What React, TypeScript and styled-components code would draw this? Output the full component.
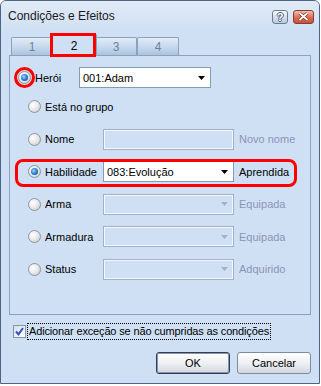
import styled, { createGlobalStyle } from 'styled-components';

const GlobalStyle = createGlobalStyle`
  html, body {
    margin: 0;
    padding: 0;
    background: #ffffff;
  }
  body {
    font-family: "Liberation Sans", Arial, sans-serif;
    font-size: 11px;
    color: #000;
  }
`;

interface RowData {
  label: string;
  value?: string;
  side?: string;
  enabled?: boolean;
  checked?: boolean;
  marked?: boolean;
  highlight?: boolean;
  combo?: boolean;
  field?: boolean;
}

const rows: RowData[] = [
  { label: 'Está no grupo' },
  { label: 'Nome', field: true, side: 'Novo nome' },
  { label: 'Habilidade', combo: true, enabled: true, checked: true, highlight: true, value: '083:Evolução', side: 'Aprendida' },
  { label: 'Arma', combo: true, side: 'Equipada' },
  { label: 'Armadura', combo: true, side: 'Equipada' },
  { label: 'Status', combo: true, side: 'Adquirido' },
];

const tabs = ['1', '2', '3', '4'];

const Arrow = ({ disabled }: { disabled?: boolean }) => (
  <svg width="7" height="4" viewBox="0 0 7 4">
    <path d="M0 0h7L3.5 4z" fill={disabled ? '#a6b0c2' : '#000'} />
  </svg>
);

export default function App() {
  return (
    <>
      <GlobalStyle />
      <Window>
        <TitleBar>
          <Title>Condições e Efeitos</Title>
          <CaptionButtons>
            <HelpButton>?</HelpButton>
            <CloseButton>
              <svg width="11" height="9" viewBox="0 0 11 9">
                <path d="M1.5 1l8 7M9.5 1l-8 7" stroke="#7a2a1e" strokeWidth="3.2" />
                <path d="M1.5 1l8 7M9.5 1l-8 7" stroke="#fff" strokeWidth="1.8" />
              </svg>
            </CloseButton>
          </CaptionButtons>
        </TitleBar>

        <Body>
          <TabStrip>
            {tabs.map((t) => (
              <Tab key={t} $active={t === '2'}>{t}</Tab>
            ))}
            <TabMark />
          </TabStrip>

          <Panel>
            <Row $indent={8} $first>
              <Radio $checked $marked />
              <Label $width={44}>Herói</Label>
              <Combo $width={132}>
                <span>001:Adam</span>
                <Arrow />
              </Combo>
            </Row>

            {rows.map((r) => (
              <Row key={r.label} $indent={18} $highlight={r.highlight}>
                <Radio $checked={r.checked} />
                <Label $width={58}>{r.label}</Label>
                {r.combo && (
                  <Combo $width={131} $disabled={!r.enabled}>
                    <span>{r.value}</span>
                    <Arrow disabled={!r.enabled} />
                  </Combo>
                )}
                {r.field && <Combo $width={131} $disabled />}
                {r.side && <Side $disabled={!r.enabled}>{r.side}</Side>}
              </Row>
            ))}
          </Panel>

          <CheckRow>
            <CheckBox>
              <svg width="11" height="11" viewBox="0 0 11 11">
                <path d="M2 5.5l2.5 2.8L9 2" stroke="#3550c4" strokeWidth="2" fill="none" />
              </svg>
            </CheckBox>
            <FocusLabel>Adicionar exceção se não cumpridas as condições</FocusLabel>
          </CheckRow>

          <ButtonRow>
            <Button $default>OK</Button>
            <Button>Cancelar</Button>
          </ButtonRow>
        </Body>
      </Window>
    </>
  );
}

const Window = styled.div`
  box-sizing: border-box;
  width: 320px;
  height: 384px;
  border: 1px solid #4d6482;
  border-radius: 6px 6px 0 0;
  background: #cfe0f4;
  display: flex;
  flex-direction: column;
  overflow: hidden;
`;

const TitleBar = styled.div`
  height: 29px;
  display: flex;
  align-items: center;
  justify-content: space-between;
  padding: 0 5px 0 7px;
  background: linear-gradient(#e2ebf7, #cfe0f4);
`;

const Title = styled.span`
  font-size: 12px;
  color: #1a1a1a;
  margin-top: 1px;
`;

const CaptionButtons = styled.div`
  display: flex;
  gap: 5px;
  margin-top: 2px;
`;

const HelpButton = styled.div`
  box-sizing: border-box;
  width: 16px;
  height: 14px;
  border: 1px solid #6a7d97;
  border-radius: 3px;
  background: linear-gradient(#f6f9fc, #b8c8db);
  color: #fff;
  font-weight: bold;
  font-size: 11px;
  line-height: 12px;
  text-align: center;
  text-shadow: 1px 0 #4d5d73, -1px 0 #4d5d73, 0 1px #4d5d73, 0 -1px #4d5d73;
`;

const CloseButton = styled.div`
  box-sizing: border-box;
  width: 21px;
  height: 14px;
  border: 1px solid #8a3b2d;
  border-radius: 3px;
  background: linear-gradient(#f2c0b2, #d86c55 55%, #c4513b);
  display: flex;
  align-items: center;
  justify-content: center;
`;

const Body = styled.div`
  flex: 1;
  padding: 3px 8px 0 8px;
  display: flex;
  flex-direction: column;
`;

const TabStrip = styled.div`
  position: relative;
  height: 22px;
  display: flex;
  align-items: flex-end;
  padding-left: 2px;
`;

const Tab = styled.div<{ $active?: boolean }>`
  box-sizing: border-box;
  width: ${(p) => (p.$active ? '46px' : '42px')};
  height: ${(p) => (p.$active ? '22px' : '18px')};
  margin: ${(p) => (p.$active ? '0 -2px -1px' : '0')};
  position: relative;
  z-index: ${(p) => (p.$active ? 1 : 0)};
  border: 1px solid #8aa2be;
  border-bottom: none;
  border-radius: 2px 2px 0 0;
  background: ${(p) => (p.$active ? '#cfe0f4' : 'linear-gradient(#e0ebf7, #c6d8ed 55%, #abc3de)')};
  color: ${(p) => (p.$active ? '#000' : '#6f8296')};
  font-size: 12px;
  display: flex;
  align-items: center;
  justify-content: center;
  padding-top: ${(p) => (p.$active ? '0' : '1px')};
`;

const TabMark = styled.div`
  position: absolute;
  left: 41px;
  top: 0;
  width: 46px;
  height: 24px;
  box-sizing: border-box;
  border: 3px solid #f00;
  z-index: 2;
`;

const Panel = styled.div`
  box-sizing: border-box;
  height: 260px;
  border: 1px solid #8aa2be;
  padding-top: 11px;
  display: flex;
  flex-direction: column;
  gap: 11.5px;
`;

const Row = styled.div<{ $indent: number; $first?: boolean; $highlight?: boolean }>`
  position: relative;
  height: 21px;
  display: flex;
  align-items: center;
  padding-left: ${(p) => p.$indent}px;
  margin-bottom: ${(p) => (p.$first ? '-3.5px' : '0')};

  ${(p) =>
    p.$highlight &&
    `
    &::after {
      content: '';
      position: absolute;
      left: 5px;
      right: 13px;
      top: -2px;
      bottom: -5px;
      border: 3px solid #f00;
      border-radius: 8px;
    }
  `}
`;

const Radio = styled.span<{ $checked?: boolean; $marked?: boolean }>`
  position: relative;
  box-sizing: border-box;
  width: 13px;
  height: 13px;
  flex-shrink: 0;
  border-radius: 50%;
  border: 1px solid #8e959e;
  background: radial-gradient(circle at 35% 35%, #ffffff 0%, #ebebeb 45%, #bfc3c8 100%);
  margin-right: 4px;

  ${(p) =>
    p.$checked &&
    `
    &::before {
      content: '';
      position: absolute;
      left: 2px;
      top: 2px;
      width: 7px;
      height: 7px;
      border-radius: 50%;
      background: radial-gradient(circle at 40% 40%, #a8dcff 0%, #2f86d6 45%, #0b3f7c 100%);
    }
  `}

  ${(p) =>
    p.$marked &&
    `
    &::after {
      content: '';
      position: absolute;
      left: -5px;
      top: -5px;
      width: 21px;
      height: 21px;
      box-sizing: border-box;
      border: 3px solid #f00;
      border-radius: 50%;
    }
  `}
`;

const Label = styled.span<{ $width: number }>`
  width: ${(p) => p.$width}px;
  flex-shrink: 0;
  white-space: nowrap;
`;

const Combo = styled.div<{ $width: number; $disabled?: boolean }>`
  box-sizing: border-box;
  width: ${(p) => p.$width}px;
  height: 21px;
  display: flex;
  align-items: center;
  justify-content: space-between;
  padding: 0 5px 0 3px;
  border: 1px solid ${(p) => (p.$disabled ? '#9fb2c9' : '#7f9db9')};
  background: ${(p) => (p.$disabled ? '#cfe0f4' : '#fff')};
  box-shadow: ${(p) => (p.$disabled ? 'inset 0 0 0 1px #f4f8fc' : 'none')};
`;

const Side = styled.span<{ $disabled?: boolean }>`
  margin-left: 5px;
  color: ${(p) => (p.$disabled ? '#8d93b6' : '#000')};
  white-space: nowrap;
`;

const CheckRow = styled.div`
  display: flex;
  align-items: center;
  margin-top: 9px;
  height: 15px;
  padding-left: 4px;
`;

const CheckBox = styled.span`
  box-sizing: border-box;
  width: 13px;
  height: 13px;
  border: 1px solid #8494ab;
  background: linear-gradient(135deg, #d8dfe8, #ffffff);
  display: flex;
  align-items: center;
  justify-content: center;
  margin-right: 2px;
`;

const FocusLabel = styled.span`
  outline: 1px dotted #000;
  padding: 1px 1px;
  line-height: 13px;
  letter-spacing: -0.15px;
`;

const ButtonRow = styled.div`
  display: flex;
  justify-content: flex-end;
  gap: 7px;
  margin-top: 13px;
`;

const Button = styled.button<{ $default?: boolean }>`
  box-sizing: border-box;
  width: 74px;
  height: 22px;
  font-family: "Liberation Sans", Arial, sans-serif;
  font-size: 11px;
  color: #000;
  border: 1px solid ${(p) => (p.$default ? '#2f3d55' : '#7b8ba2')};
  box-shadow: ${(p) => (p.$default ? 'inset 0 0 0 1px #8596ae' : 'none')};
  border-radius: 3px;
  background: linear-gradient(#ffffff, #eef0f3 50%, #d3d8df);
  padding: 0;
`;
